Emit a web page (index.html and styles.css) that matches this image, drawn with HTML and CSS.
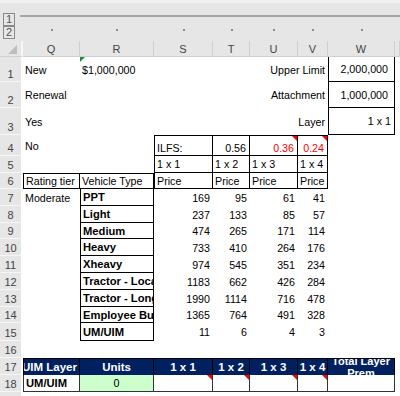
FILE: index.html
```html
<!DOCTYPE html>
<html>
<head>
<meta charset="utf-8">
<link rel="stylesheet" href="styles.css">
</head>
<body>
<div class="outline">
  <div class="levels"><span class="lvl">1</span><span class="lvl">2</span></div>
  <div class="outline-main">
    <div class="level-line"></div>
    <div class="dots"><i></i><i></i><i></i><i></i><i></i><i></i><i></i></div>
  </div>
</div>
<div class="sheet">
  <div class="corner"></div><div class="ch">Q</div><div class="ch">R</div><div class="ch">S</div><div class="ch">T</div><div class="ch">U</div><div class="ch">V</div><div class="ch">W</div><div class="ch"></div>

  <div class="rh">1</div><div class="c">New</div><div class="c gtri">$1,000,000</div><div class="c"></div><div class="c"></div><div class="c r span2">Upper Limit</div><div class="c r bl br bb pw">2,000,000</div><div class="c"></div>

  <div class="rh">2</div><div class="c">Renewal</div><div class="c"></div><div class="c"></div><div class="c"></div><div class="c r span2">Attachment</div><div class="c r bl br bb pw">1,000,000</div><div class="c"></div>

  <div class="rh">3</div><div class="c">Yes</div><div class="c"></div><div class="c"></div><div class="c"></div><div class="c"></div><div class="c r">Layer</div><div class="c r bl br bb">1 x 1</div><div class="c"></div>

  <div class="rh">4</div><div class="c">No</div><div class="c"></div><div class="c bot bl bt br bb">ILFS:</div><div class="c r bot bt br bb">0.56</div><div class="c r bot red tri bt br bb">0.36</div><div class="c r bot red tri bt br bb">0.24</div><div class="c"></div><div class="c"></div>

  <div class="rh">5</div><div class="c"></div><div class="c"></div><div class="c bl br bb">1 x 1</div><div class="c br bb">1 x 2</div><div class="c br bb">1 x 3</div><div class="c br bb">1 x 4</div><div class="c"></div><div class="c"></div>

  <div class="rh">6</div><div class="c bl bt br bb">Rating tier</div><div class="c bt br bb">Vehicle Type</div><div class="c bl br bb">Price</div><div class="c br bb">Price</div><div class="c br bb">Price</div><div class="c br bb">Price</div><div class="c"></div><div class="c"></div>

  <div class="rh">7</div><div class="c">Moderate</div><div class="c b bl br bb">PPT</div><div class="c r">169</div><div class="c r">95</div><div class="c r">61</div><div class="c r">41</div><div class="c"></div><div class="c"></div>

  <div class="rh">8</div><div class="c"></div><div class="c b bl br bb">Light</div><div class="c r">237</div><div class="c r">133</div><div class="c r">85</div><div class="c r">57</div><div class="c"></div><div class="c"></div>

  <div class="rh">9</div><div class="c"></div><div class="c b bl br bb">Medium</div><div class="c r">474</div><div class="c r">265</div><div class="c r">171</div><div class="c r">114</div><div class="c"></div><div class="c"></div>

  <div class="rh">10</div><div class="c"></div><div class="c b bl br bb">Heavy</div><div class="c r">733</div><div class="c r">410</div><div class="c r">264</div><div class="c r">176</div><div class="c"></div><div class="c"></div>

  <div class="rh">11</div><div class="c"></div><div class="c b bl br bb">Xheavy</div><div class="c r">974</div><div class="c r">545</div><div class="c r">351</div><div class="c r">234</div><div class="c"></div><div class="c"></div>

  <div class="rh">12</div><div class="c"></div><div class="c b bl br bb">Tractor - Local</div><div class="c r">1183</div><div class="c r">662</div><div class="c r">426</div><div class="c r">284</div><div class="c"></div><div class="c"></div>

  <div class="rh">13</div><div class="c"></div><div class="c b bl br bb">Tractor - Long Haul</div><div class="c r">1990</div><div class="c r">1114</div><div class="c r">716</div><div class="c r">478</div><div class="c"></div><div class="c"></div>

  <div class="rh">14</div><div class="c"></div><div class="c b bl br bb">Employee Bus</div><div class="c r">1365</div><div class="c r">764</div><div class="c r">491</div><div class="c r">328</div><div class="c"></div><div class="c"></div>

  <div class="rh">15</div><div class="c"></div><div class="c b bl br bb">UM/UIM</div><div class="c r">11</div><div class="c r">6</div><div class="c r">4</div><div class="c r">3</div><div class="c"></div><div class="c"></div>

  <div class="rh">16</div><div class="c"></div><div class="c"></div><div class="c"></div><div class="c"></div><div class="c"></div><div class="c"></div><div class="c"></div><div class="c"></div>

  <div class="rh">17</div><div class="c hdr hl">UIM Layer</div><div class="c hdr">Units</div><div class="c hdr">1 x 1</div><div class="c hdr">1 x 2</div><div class="c hdr">1 x 3</div><div class="c hdr">1 x 4</div><div class="c hdr wrap">Total Layer Prem</div><div class="c"></div>

  <div class="rh">18</div><div class="c b ft fl">UM/UIM</div><div class="c ctr green ft">0</div><div class="c tri ft"></div><div class="c tri ft"></div><div class="c tri ft"></div><div class="c tri ft"></div><div class="c ft"></div><div class="c"></div>

  <div class="rh"></div><div class="c"></div><div class="c"></div><div class="c"></div><div class="c"></div><div class="c"></div><div class="c"></div><div class="c"></div><div class="c"></div>
</div>
</body>
</html>
```
FILE: styles.css
```css
* { box-sizing: border-box; }

body {
  margin: 0;
  width: 400px;
  height: 396px;
  overflow: hidden;
  background: #fff;
  font-family: "Liberation Sans", Arial, sans-serif;
}

.outline {
  height: 41px;
  background: #e6e6e6;
  border-top: 3px solid #f0f0f0;
  display: grid;
  grid-template-columns: 20px 1fr;
}

.levels {
  display: flex;
  flex-direction: column;
  padding: 10px 0 0 3px;
}

.lvl {
  width: 12px;
  height: 13px;
  border: 1px solid #8a8a8a;
  font-size: 11px;
  line-height: 11px;
  text-align: center;
  color: #555;
}

.outline-main {
  display: flex;
  flex-direction: column;
}

.level-line {
  height: 2px;
  margin-top: 12px;
  background: #a6a6a6;
}

.dots {
  display: grid;
  grid-template-columns: 57px 74px 59px 37px 48px 30px 67px;
  padding-left: 3px;
  margin-top: 12px;
}

.dots i {
  justify-self: center;
  width: 2px;
  height: 2px;
  background: #8c8c8c;
}

.sheet {
  display: grid;
  grid-template-columns: 23px 57px 74px 59px 37px 48px 30px 67px 5px;
  grid-template-rows: 16px 25px 26px 27px 21px 17px 16px 17px 17px 16px 17px 17px 17px 17px 16px 18px 17px 17px 17px 20px;
  font-size: 10.7px;
  color: #000;
}

.corner {
  background: #e6e6e6;
  border-right: 2px solid #f7f7f7;
  border-bottom: 1px solid #d0d0d0;
  position: relative;
}

.corner::after {
  content: "";
  position: absolute;
  right: 4px;
  bottom: 2px;
  border-left: 9px solid transparent;
  border-bottom: 9px solid #bdbdbd;
}

.ch {
  background: #e6e6e6;
  border-right: 1px solid #cfcfcf;
  border-bottom: 1px solid #d0d0d0;
  display: flex;
  align-items: center;
  justify-content: center;
  font-size: 11px;
  color: #444;
}

.rh {
  background: #e6e6e6;
  border-right: 2px solid #fff;
  border-bottom: 1px solid #f6f6f6;
  display: flex;
  align-items: flex-end;
  justify-content: center;
  padding-bottom: 1px;
  font-size: 11px;
  color: #444;
}

.c {
  display: flex;
  align-items: center;
  padding: 0 2px;
  white-space: nowrap;
  overflow: hidden;
  position: relative;
  min-width: 0;
}

.r { justify-content: flex-end; padding-right: 3px; }
.pw { padding-right: 6px; }
.ctr { justify-content: center; }
.bot { align-items: flex-end; padding-bottom: 1px; }
.b { font-weight: bold; font-size: 11.2px; }
.red { color: #ff0000; }
.span2 { grid-column: span 2; }

.bl { border-left: 1px solid #000; }
.br { border-right: 1px solid #000; }
.bt { border-top: 1px solid #000; }
.bb { border-bottom: 1px solid #000; }

.tri::after {
  content: "";
  position: absolute;
  top: 0;
  right: 0;
  border-top: 5px solid #ff0000;
  border-left: 5px solid transparent;
}

.gtri::before {
  content: "";
  position: absolute;
  top: 0;
  left: 0;
  border-top: 5px solid #1e8c3a;
  border-right: 5px solid transparent;
}

.hdr {
  background: #002060;
  color: #fff;
  font-weight: bold;
  font-size: 11.5px;
  justify-content: center;
  border-top: 1px solid #000;
  border-right: 1px solid #000;
}

.hl {
  border-left: 1px solid #000;
  justify-content: flex-end;
  padding-right: 2px;
}

.wrap {
  flex-direction: column;
  white-space: normal;
  text-align: center;
  font-size: 11px;
  line-height: 12px;
  padding: 0;
}

.green { background: #ccffcc; }

.ft {
  border-right: 1px solid #333;
  border-bottom: 1px solid #333;
}

.fl { border-left: 1px solid #333; }
```
